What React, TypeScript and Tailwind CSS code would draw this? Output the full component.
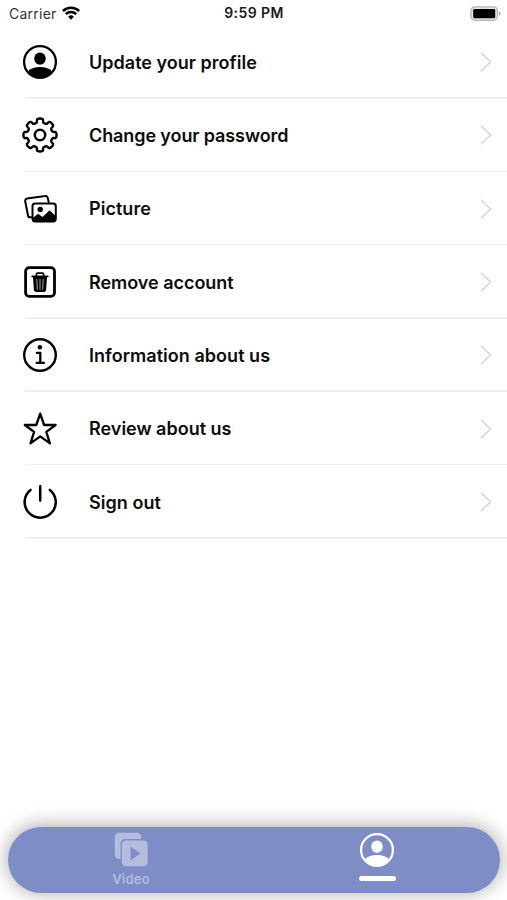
import React from "react";

const font = "font-['Inter','Liberation_Sans',sans-serif]";

function gearPath(): string {
  const pts: [number, number][] = [];
  for (let i = 0; i < 8; i++) {
    const c = i * 45 - 90;
    const ring: [number, number][] = [
      [-12.5, 13],
      [-11.5, 16.9],
      [11.5, 16.9],
      [12.5, 13],
      [22.5, 12.4],
    ];
    ring.forEach(([a, r]) => {
      const t = ((c + a) * Math.PI) / 180;
      pts.push([18 + r * Math.cos(t), 18 + r * Math.sin(t)]);
    });
  }
  const n = pts.length;
  const mid = (i: number) => {
    const a = pts[i % n];
    const b = pts[(i + 1) % n];
    return `${((a[0] + b[0]) / 2).toFixed(2)} ${((a[1] + b[1]) / 2).toFixed(2)}`;
  };
  let d = `M${mid(n - 1)}`;
  for (let i = 0; i < n; i++) {
    d += `Q${pts[i][0].toFixed(2)} ${pts[i][1].toFixed(2)} ${mid(i)}`;
  }
  return d + "Z";
}

function Svg({ children }: { children: React.ReactNode }) {
  return (
    <svg
      viewBox="0 0 36 36"
      className="size-9 shrink-0"
      fill="none"
      stroke="currentColor"
      strokeWidth="2.5"
      strokeLinecap="round"
      strokeLinejoin="round"
    >
      {children}
    </svg>
  );
}

const UserIcon = () => (
  <Svg>
    <circle cx="18" cy="18" r="15.9" strokeWidth="2.3" />
    <ellipse cx="18" cy="14.6" rx="5.8" ry="6.2" fill="currentColor" stroke="none" />
    <path d="M6.2 27.2C8.7 24.2 13 22.9 18 22.9s9.3 1.3 11.8 4.3A16 16 0 0 1 18 34 16 16 0 0 1 6.2 27.2Z" fill="currentColor" stroke="none" />
  </Svg>
);

const GearIcon = () => (
  <Svg>
    <path d={gearPath()} strokeWidth="2.4" />
    <circle cx="18" cy="18" r="5.2" />
  </Svg>
);

const PictureIcon = () => (
  <Svg>
    <path d="M9.4 26.3H8.2A2.1 2.1 0 0 1 6 24.5L3.2 10.2A2.2 2.2 0 0 1 5 7.6L23.2 5.1A2.2 2.2 0 0 1 25.7 6.8L26.7 11" strokeWidth="2" />
    <rect x="10.5" y="12.4" width="23.3" height="18" rx="2.6" strokeWidth="2" />
    <circle cx="18.2" cy="18.4" r="2.7" fill="currentColor" stroke="none" />
    <path d="M10.5 27.3 16 22.8l4.7 3.1 5.8-5.7c.7-.6 1.5-.6 2.2 0l5.1 5V28a2.5 2.5 0 0 1-2.5 2.5H13a2.5 2.5 0 0 1-2.5-2.5Z" fill="currentColor" stroke="none" />
  </Svg>
);

const TrashIcon = () => (
  <Svg>
    <rect x="3.6" y="3.7" width="28.9" height="28.7" rx="3.6" strokeWidth="2.8" />
    <path d="M14.3 11.5V10.4c0-.9.6-1.3 1.4-1.3h4.6c.8 0 1.4.4 1.4 1.3v1.1" strokeWidth="1.6" />
    <path d="M10.3 12.4h15.4" strokeWidth="1.8" />
    <path d="M11 13h14l-.9 12.800c-.1 1.400-.8 2.100-2.200 2.100h-7.800c-1.400 0-2.100-.7-2.200-2.100Z" fill="currentColor" stroke="none" />
    <path d="m14.8 15.500.5 9.800M18 15.500v9.800M21.200 15.500l-.5 9.800" stroke="#aaa" strokeWidth="1" />
  </Svg>
);

const InfoIcon = () => (
  <Svg>
    <circle cx="18" cy="18" r="15.8" strokeWidth="2.4" />
    <circle cx="17.9" cy="10.2" r="2.2" fill="currentColor" stroke="none" />
    <path d="M14.9 15.9h3.4v9.800M14.600 25.800h7.400" strokeWidth="2.3" />
  </Svg>
);

const StarIcon = () => (
  <Svg>
    <path d="M18.2 2.7 22.1 14H33.6L24.3 20.9 27.9 32.4 18.2 25.4 8.5 32.4 12.1 20.9 2.8 14H14.3Z" strokeWidth="2.3" />
  </Svg>
);

const PowerIcon = () => (
  <Svg>
    <path d="M8.5 5.9A15.6 15.6 0 1 0 27.9 5.9M18.2 2.2V16.6" strokeWidth="2.5" />
  </Svg>
);

const items = [
  { label: "Update your profile", Icon: UserIcon, tracking: "tracking-[0.02px]" },
  { label: "Change your password", Icon: GearIcon, tracking: "tracking-[-0.1px]" },
  { label: "Picture", Icon: PictureIcon, tracking: "tracking-[0.05px]" },
  { label: "Remove account", Icon: TrashIcon, tracking: "tracking-[-0.03px]" },
  { label: "Information about us", Icon: InfoIcon, tracking: "tracking-[0.04px]" },
  { label: "Review about us", Icon: StarIcon, tracking: "tracking-normal" },
  { label: "Sign out", Icon: PowerIcon, tracking: "tracking-[0.04px]" },
];

function StatusBar() {
  return (
    <header className="grid h-[25.5px] shrink-0 grid-cols-3 items-center pl-[9px] pr-[6px] text-[#1a1a1a]">
      <div className="flex h-[26px] items-center gap-[5px] text-[14px] tracking-[0.25px] text-[#333]">
        <span>Carrier</span>
        <svg viewBox="0 0 18 14" className="-mt-px h-[14px] w-[18px]" fill="none" stroke="#000" strokeWidth="2.5">
          <path d="M.9 5a11.5 11.5 0 0 1 16.2 0" />
          <path d="M3.8 8.2a7.4 7.4 0 0 1 10.4 0" />
          <path d="M9 13.7 6.1 10.8a4.1 4.1 0 0 1 5.8 0Z" fill="#000" stroke="none" />
        </svg>
      </div>
      <div className="text-center text-[14px] leading-[26px] font-semibold tracking-[0.4px]">
        <span className="-ml-[2px]">9:59 PM</span>
      </div>
      <div className="flex items-center justify-end">
        <svg viewBox="0 0 31 15" className="h-[15px] w-[31px]">
          <rect x=".9" y=".9" width="26.6" height="13.4" rx="4" fill="#e4e4e4" stroke="#b5b5b5" strokeWidth="1.3" />
          <rect x="3.2" y="3" width="22" height="9.2" rx="1.3" fill="#000" />
          <path d="M29 5.2c2 .8 2 3.8 0 4.6Z" fill="#aaa" />
        </svg>
      </div>
    </header>
  );
}

export default function App() {
  return (
    <div className={`flex h-[900px] w-full flex-col overflow-hidden bg-white ${font}`}>
      <StatusBar />
      <ul className="flex flex-col">
        {items.map(({ label, Icon, tracking }) => (
          <li key={label} className="flex h-[73.3px] flex-col text-black">
            <div className="flex flex-1 items-center pt-[1.6px] pr-[15px] pl-[22px]">
              <Icon />
              <span className={`ml-[31px] flex-1 pt-[1.4px] text-[18px] leading-6 font-semibold text-[#0c0c0c] ${tracking}`}>{label}</span>
              <svg viewBox="0 0 12 20" className="h-5 w-3" fill="none" stroke="#d2d2d4" strokeWidth="1.3">
                <path d="m1 .8 9.6 9.2L1 19.2" />
              </svg>
            </div>
            <div className="ml-[25px] h-[1.5px] bg-[#efefef]" />
          </li>
        ))}
      </ul>
      <nav className="mr-[7px] ml-2 mt-auto mb-[7.5px] grid h-[66px] shrink-0 grid-cols-2 rounded-full bg-[#7f8dc7] shadow-[0_-1px_18px_2px_rgba(0,0,0,0.3)]">
        <div className="flex flex-col items-center pt-[5.5px] text-[#b4bde0]">
          <svg viewBox="0 0 34 35" className="h-[35px] w-[34px]" fill="currentColor">
            <path d="M5 .7h18a4.300 4.300 0 0 1 4.300 4.300V7H11a4.500 4.500 0 0 0-4.500 4.500V27h-1.500A4.300 4.300 0 0 1 .7 22.700V5A4.300 4.300 0 0 1 5 .7Z" />
            <path fillRule="evenodd" d="M12 8.400h17.500a4.200 4.200 0 0 1 4.200 4.200v17.500a4.200 4.200 0 0 1-4.200 4.200H12A4.200 4.200 0 0 1 7.800 30.100V12.600A4.200 4.200 0 0 1 12 8.400ZM16.500 14.500v14l9.700-7Z" />
          </svg>
          <span className="mt-[2.5px] text-[13px] leading-[18px] font-semibold tracking-[0.2px]">Video</span>
        </div>
        <div className="flex flex-col items-center pt-[5.5px] text-white">
          <UserIcon />
          <span className="mt-[8px] h-[5px] w-[37px] rounded-full bg-white" />
        </div>
      </nav>
    </div>
  );
}
